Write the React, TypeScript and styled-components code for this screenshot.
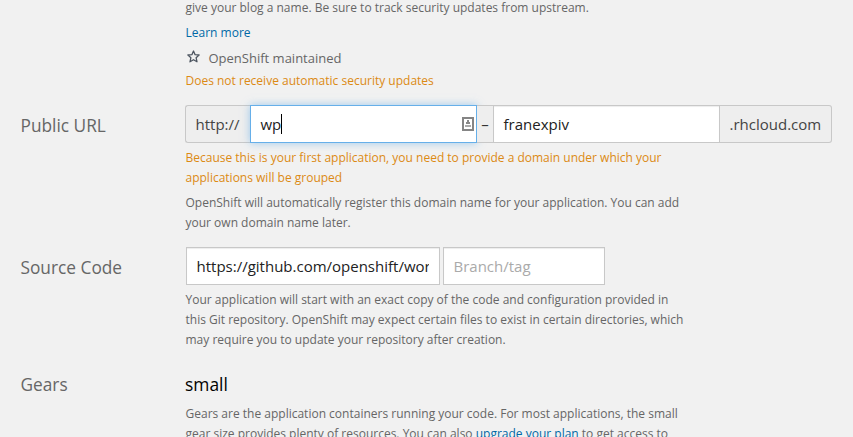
import React from "react";
import styled, { createGlobalStyle } from "styled-components";

const Global = createGlobalStyle`
  * { box-sizing: border-box; }
  body { margin: 0; background: #f1f1f1; overflow: hidden; font-family: "Open Sans", sans-serif; }
`;

const Page = styled.main`
  height: 437px;
  overflow: hidden;
  background: #f1f1f1;
`;

const Row = styled.section<{ $height: number }>`
  display: grid;
  grid-template-columns: 165px 647px;
  padding-left: 20px;
  height: ${(p) => p.$height}px;
`;

const Label = styled.label`
  padding: 2px 0 0 0.5px;
  font-size: 17.3px;
  line-height: 38px;
  color: #666;
`;

const Text = styled.p<{ $tone?: "warn"; $gap?: number }>`
  margin: ${(p) => p.$gap ?? 0}px 0 0 0.5px;
  font-size: 12px;
  line-height: 20px;
  white-space: nowrap;
  color: ${(p) => (p.$tone === "warn" ? "#dc8a14" : "#666")};
`;

const Link = styled.a`
  color: #0069a6;
`;

const Badge = styled.div`
  display: flex;
  align-items: center;
  gap: 9px;
  margin-top: 5px;
  padding-left: 1.5px;
  height: 20px;
  font-size: 13px;
  color: #666;

  svg {
    display: block;
    margin-top: -3px;
  }
`;

const Fields = styled.div<{ $gap?: number; $inset?: number }>`
  display: flex;
  gap: ${(p) => p.$gap ?? 0}px;
  padding-left: ${(p) => p.$inset ?? 0}px;
  height: 38px;
`;

const AddOn = styled.span<{ $side: "left" | "right"; $width: number }>`
  width: ${(p) => p.$width}px;
  border: 1px solid #c8c8c8;
  border-radius: ${(p) => (p.$side === "left" ? "3px 0 0 3px" : "0 3px 3px 0")};
  border-${(p) => (p.$side === "left" ? "right" : "left")}: 0;
  background: #eee;
  padding-left: 9.5px;
  font-size: 15px;
  line-height: 36px;
  color: #444;
`;

const Field = styled.div<{ $width: number; $focus?: boolean; $muted?: boolean }>`
  display: flex;
  align-items: center;
  flex: none;
  width: ${(p) => p.$width}px;
  height: 38px;
  padding: 0 10px 0 9.5px;
  border: 1px solid ${(p) => (p.$focus ? "#66afe9" : "#c8c8c8")};
  box-shadow: ${(p) =>
    p.$focus ? "0 0 8px rgba(102,175,233,.6)" : "inset 0 1px 1px rgba(0,0,0,.075)"};
  background: #fff;
  font-size: 15px;
  color: ${(p) => (p.$muted ? "#aaa" : "#222")};
  white-space: nowrap;
`;

const Clip = styled.span`
  overflow: hidden;
`;

const Caret = styled.i`
  width: 1px;
  height: 20px;
  background: #000;
`;

const CardIcon = styled.svg`
  display: block;
  margin: -1px -8px 0 auto;
`;

const Dash = styled.span`
  width: 16px;
  border: solid #c8c8c8;
  border-width: 1px 0;
  background: #eee;
  text-align: center;
  font-size: 15px;
  line-height: 36px;
  color: #333;
`;

const Size = styled.div`
  padding-top: 1px;
  font-size: 17.4px;
  line-height: 38px;
  color: #000;
`;

export default function App() {
  return (
    <>
      <Global />
      <Page>
        <Row $height={105}>
          <span />
          <div>
            <Text $gap={-2}>give your blog a name. Be sure to track security updates from upstream.</Text>
            <Text $gap={5}><Link>Learn more</Link></Text>
            <Badge>
              <svg width="13" height="13" viewBox="0 0 13 13" fill="none" stroke="#4d5560" strokeWidth="1.3" strokeLinejoin="round">
                <path d="M6.5 1 8.1 4.7 12.1 5 9.1 7.7 10 11.8 6.5 9.7 3 11.8 3.9 7.7.9 5 4.9 4.7Z" />
              </svg>
              OpenShift maintained
            </Badge>
            <Text $tone="warn" $gap={3}>Does not receive automatic security updates</Text>
          </div>
        </Row>
        <Row $height={142}>
          <Label>Public URL</Label>
          <div>
            <Fields>
              <AddOn $side="left" $width={65}>http://</AddOn>
              <Field $width={227} $focus>
                wp<Caret />
                <CardIcon width="12" height="14" viewBox="0 0 12 14">
                  <rect x="1" y="1" width="10" height="12" fill="#fff" stroke="#858585" strokeWidth="2" />
                  <path d="M5 3h2v2h1v2H4V5h1Z" fill="#888" />
                  <path d="M3 8h6v2H3Z" fill="#aaa" />
                </CardIcon>
              </Field>
              <Dash>–</Dash>
              <Field $width={227}>franexpiv</Field>
              <AddOn $side="right" $width={112}>.rhcloud.com</AddOn>
            </Fields>
            <Text $tone="warn" $gap={5}>Because this is your first application, you need to provide a domain under which your<br />applications will be grouped</Text>
            <Text $gap={5}>OpenShift will automatically register this domain name for your application. You can add<br />your own domain name later.</Text>
          </div>
        </Row>
        <Row $height={117}>
          <Label>Source Code</Label>
          <div>
            <Fields $gap={3} $inset={1}>
              <Field $width={254}><Clip>https://github.com/openshift/wor</Clip></Field>
              <Field $width={162} $muted>Branch/tag</Field>
            </Fields>
            <Text $gap={5}>Your application will start with an exact copy of the code and configuration provided in<br />this Git repository. OpenShift may expect certain files to exist in certain directories, which<br />may require you to update your repository after creation.</Text>
          </div>
        </Row>
        <Row $height={90}>
          <Label>Gears</Label>
          <div>
            <Size>small</Size>
            <Text $gap={1}>Gears are the application containers running your code. For most applications, the small<br />gear size provides plenty of resources. You can also <Link>upgrade your plan</Link> to get access to</Text>
          </div>
        </Row>
      </Page>
    </>
  );
}
